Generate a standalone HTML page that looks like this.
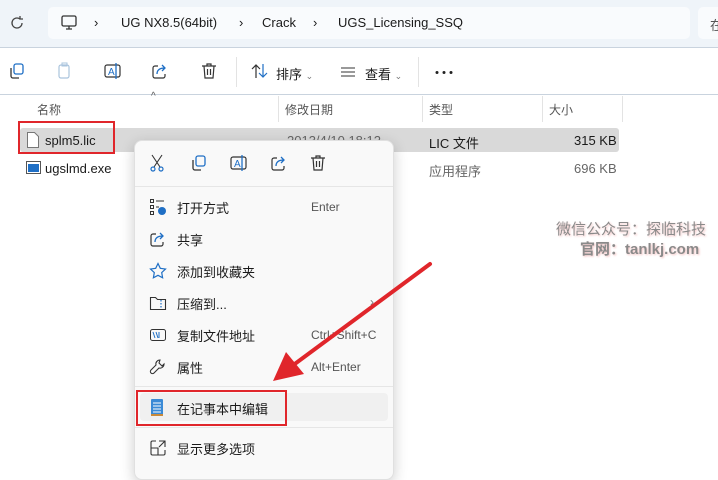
<!DOCTYPE html>
<html><head><meta charset="utf-8"><style>
*{margin:0;padding:0;box-sizing:border-box}
body{width:718px;height:466px;overflow:hidden;background:#fff;font-family:"Liberation Sans","Noto Sans CJK SC",sans-serif;color:#1a1a1a;position:relative;font-size:12px}
.a{position:absolute}
.top{left:0;top:0;width:718px;height:48px;background:#eff4f9;border-bottom:1px solid #c9d3de}
.addr{left:48px;top:7px;width:642px;height:32px;background:#f9fbfd;border-radius:5px}
.addr2{left:698px;top:7px;width:30px;height:32px;background:#f9fbfd;border-radius:5px}
.t13{font-size:13px}
.hdr{color:#555;font-size:12px}
.vl{width:1px;background:#e3e3e3}
.menu{left:134px;top:140px;width:260px;height:340px;background:#f9f9f9;border-radius:8px;box-shadow:0 4px 14px rgba(0,0,0,.2);border:1px solid #e0e0e0}
.mi{left:177px;font-size:13px}
.sc{left:311px;font-size:12px;color:#555}
.sep{left:135px;width:258px;height:1px;background:#e6e6e6}
svg{position:absolute}
</style></head><body>
<div class="a top"></div>
<svg style="left:8px;top:14px" width="18" height="18" viewBox="0 0 18 18"><path d="M14 9a5 5 0 1 1-2-4M12 2v3h3" fill="none" stroke="#444" stroke-width="1.3"/></svg>
<div class="a addr"></div><div class="a addr2"></div>
<svg style="left:60px;top:14px" width="18" height="18" viewBox="0 0 18 18"><rect x="2" y="2" width="14" height="10" rx="1.5" fill="none" stroke="#333" stroke-width="1.3"/><path d="M6 15h6M9 12v3" stroke="#333" stroke-width="1.3"/></svg>
<div class="a t13" style="left:94px;top:15px">›</div>
<div class="a t13" style="left:121px;top:15px">UG NX8.5(64bit)</div>
<div class="a t13" style="left:239px;top:15px">›</div>
<div class="a t13" style="left:262px;top:15px">Crack</div>
<div class="a t13" style="left:313px;top:15px">›</div>
<div class="a t13" style="left:338px;top:15px">UGS_Licensing_SSQ</div>
<div class="a" style="left:710px;top:15px;font-size:13px;color:#555">在</div>
<!-- toolbar -->
<svg style="left:8px;top:62px" width="18" height="18" viewBox="0 0 18 18"><rect x="6" y="2" width="9" height="10" rx="2" fill="none" stroke="#1f6fc5" stroke-width="1.3"/><path d="M3 6v8a2 2 0 0 0 2 2h6" fill="none" stroke="#333" stroke-width="1.3"/></svg>
<svg style="left:56px;top:62px" width="18" height="18" viewBox="0 0 18 18"><rect x="3" y="3" width="10" height="13" rx="2" fill="none" stroke="#aac4dd" stroke-width="1.2"/><rect x="6" y="1" width="5" height="3" fill="none" stroke="#aac4dd"/></svg>
<svg style="left:103px;top:62px" width="20" height="18" viewBox="0 0 20 18"><rect x="2" y="3" width="15" height="12" rx="2" fill="none" stroke="#333" stroke-width="1.2"/><text x="5" y="13" font-size="10" fill="#1f6fc5" font-family="Liberation Sans">A</text><path d="M13 1v16" stroke="#1f6fc5" stroke-width="1.3"/></svg>
<svg style="left:151px;top:62px" width="18" height="18" viewBox="0 0 18 18"><path d="M7 4H4a2 2 0 0 0-2 2v8a2 2 0 0 0 2 2h8a2 2 0 0 0 2-2v-2" fill="none" stroke="#333" stroke-width="1.2"/><path d="M6 12c0-4 3-6 8-6M11 3l3 3-3 3" fill="none" stroke="#1f6fc5" stroke-width="1.3"/></svg>
<svg style="left:200px;top:62px" width="18" height="18" viewBox="0 0 18 18"><path d="M2 4h14M7 4V2h4v2M4 4l1 12h8l1-12M7.5 7v6M10.5 7v6" fill="none" stroke="#333" stroke-width="1.2"/></svg>
<div class="a vl" style="left:236px;top:57px;height:30px"></div>
<svg style="left:251px;top:63px" width="18" height="16" viewBox="0 0 18 16"><path d="M5 15V2M1 6l4-4 4 4" fill="none" stroke="#333" stroke-width="1.2"/><path d="M12 1v13M8 10l4 4 4-4" fill="none" stroke="#1f6fc5" stroke-width="1.2"/></svg>
<div class="a t13" style="left:276px;top:64px">排序 <span style="font-size:9px;color:#777">⌄</span></div>
<svg style="left:340px;top:66px" width="16" height="12" viewBox="0 0 16 12"><path d="M1 2h14M1 6h14M1 10h14" stroke="#333" stroke-width="1.1"/></svg>
<div class="a t13" style="left:365px;top:64px">查看 <span style="font-size:9px;color:#777">⌄</span></div>
<div class="a vl" style="left:418px;top:57px;height:30px"></div>
<svg style="left:434px;top:70px" width="20" height="5" viewBox="0 0 20 5"><circle cx="3" cy="2.5" r="1.5" fill="#222"/><circle cx="10" cy="2.5" r="1.5" fill="#222"/><circle cx="17" cy="2.5" r="1.5" fill="#222"/></svg>
<div class="a" style="left:0;top:94px;width:718px;height:1px;background:#c9d3de"></div>
<!-- header -->
<div class="a" style="left:151px;top:91px;font-size:10px;color:#555">^</div>
<div class="a hdr" style="left:37px;top:101px">名称</div>
<div class="a vl" style="left:278px;top:96px;height:26px"></div>
<div class="a hdr" style="left:285px;top:101px">修改日期</div>
<div class="a vl" style="left:422px;top:96px;height:26px"></div>
<div class="a hdr" style="left:429px;top:101px">类型</div>
<div class="a vl" style="left:542px;top:96px;height:26px"></div>
<div class="a hdr" style="left:549px;top:101px">大小</div>
<div class="a vl" style="left:622px;top:96px;height:26px"></div>
<!-- rows -->
<div class="a" style="left:20px;top:128px;width:599px;height:24px;background:#d9d9d9;border-radius:3px"></div>
<svg style="left:26px;top:131px" width="14" height="18" viewBox="0 0 14 18"><path d="M1.5 1.5h7l4 4v11h-11z" fill="#fff" stroke="#777"/></svg>
<div class="a t13" style="left:45px;top:133px">splm5.lic</div>
<div class="a" style="left:18px;top:121px;width:97px;height:33px;border:2px solid #e0262b"></div>
<div class="a t13" style="left:287px;top:133px;color:#666">2013/4/10 18:12</div>
<div class="a t13" style="left:429px;top:133px">LIC 文件</div>
<div class="a t13" style="left:574px;top:133px">315 KB</div>
<svg style="left:26px;top:161px" width="15" height="13" viewBox="0 0 15 13"><rect x=".5" y=".5" width="14" height="12" fill="#fff" stroke="#555"/><rect x="2" y="3" width="11" height="8" fill="#1f6fc5"/></svg>
<div class="a t13" style="left:45px;top:161px">ugslmd.exe</div>
<div class="a t13" style="left:429px;top:161px;color:#666">应用程序</div>
<div class="a t13" style="left:574px;top:161px;color:#666">696 KB</div>
<!-- watermark -->
<div class="a" style="left:556px;top:218px;font-size:15px;color:#8a8a8a;text-shadow:1px 1px 2px #f3c0c0">微信公众号：探临科技</div>
<div class="a" style="left:580px;top:238px;font-size:15px;color:#8a8a8a;font-weight:bold;text-shadow:1px 1px 2px #f3c0c0">官网：tanlkj.com</div>
<!-- menu -->
<div class="a menu"></div>
<svg style="left:149px;top:154px" width="16" height="18" viewBox="0 0 16 18"><path d="M3 1l8 12M13 1L5 13" stroke="#333" stroke-width="1.1"/><circle cx="4" cy="15" r="2" fill="none" stroke="#1f6fc5" stroke-width="1.2"/><circle cx="12" cy="15" r="2" fill="none" stroke="#1f6fc5" stroke-width="1.2"/></svg>
<svg style="left:190px;top:154px" width="18" height="18" viewBox="0 0 18 18"><rect x="6" y="2" width="9" height="10" rx="2" fill="none" stroke="#1f6fc5" stroke-width="1.3"/><path d="M3 6v8a2 2 0 0 0 2 2h6" fill="none" stroke="#333" stroke-width="1.3"/></svg>
<svg style="left:229px;top:154px" width="20" height="18" viewBox="0 0 20 18"><rect x="2" y="3" width="15" height="12" rx="2" fill="none" stroke="#333" stroke-width="1.2"/><text x="5" y="13" font-size="10" fill="#1f6fc5" font-family="Liberation Sans">A</text><path d="M13 1v16" stroke="#1f6fc5" stroke-width="1.3"/></svg>
<svg style="left:270px;top:154px" width="18" height="18" viewBox="0 0 18 18"><path d="M7 4H4a2 2 0 0 0-2 2v8a2 2 0 0 0 2 2h8a2 2 0 0 0 2-2v-2" fill="none" stroke="#333" stroke-width="1.2"/><path d="M6 12c0-4 3-6 8-6M11 3l3 3-3 3" fill="none" stroke="#1f6fc5" stroke-width="1.3"/></svg>
<svg style="left:309px;top:154px" width="18" height="18" viewBox="0 0 18 18"><path d="M2 4h14M7 4V2h4v2M4 4l1 12h8l1-12M7.5 7v6M10.5 7v6" fill="none" stroke="#333" stroke-width="1.2"/></svg>
<div class="a sep" style="top:186px"></div>
<svg style="left:149px;top:198px" width="18" height="18" viewBox="0 0 18 18"><rect x="1.5" y="1.5" width="3" height="3" fill="none" stroke="#333"/><rect x="1.5" y="7.5" width="3" height="3" fill="none" stroke="#333"/><rect x="1.5" y="13.5" width="3" height="3" fill="none" stroke="#333"/><path d="M7 3h8M7 9h3" stroke="#333"/><circle cx="13" cy="13" r="4" fill="#1f6fc5"/></svg>
<div class="a mi" style="top:198px">打开方式</div><div class="a sc" style="top:200px">Enter</div>
<svg style="left:149px;top:230px" width="18" height="18" viewBox="0 0 18 18"><path d="M7 4H4a2 2 0 0 0-2 2v8a2 2 0 0 0 2 2h8a2 2 0 0 0 2-2v-2" fill="none" stroke="#333" stroke-width="1.2"/><path d="M6 12c0-4 3-6 8-6M11 3l3 3-3 3" fill="none" stroke="#1f6fc5" stroke-width="1.3"/></svg>
<div class="a mi" style="top:230px">共享</div>
<svg style="left:149px;top:262px" width="18" height="18" viewBox="0 0 18 18"><path d="M9 1.5l2.3 4.8 5.2.7-3.8 3.6.9 5.2L9 13.3l-4.6 2.5.9-5.2L1.5 7l5.2-.7z" fill="none" stroke="#1f6fc5" stroke-width="1.2"/></svg>
<div class="a mi" style="top:262px">添加到收藏夹</div>
<svg style="left:149px;top:294px" width="18" height="18" viewBox="0 0 18 18"><path d="M1.5 3.5h5l2 2h8v10h-15z" fill="none" stroke="#333" stroke-width="1.1"/><path d="M12 6v9" stroke="#1f6fc5" stroke-dasharray="1.5 1.5" stroke-width="1.2"/></svg>
<div class="a mi" style="top:294px">压缩到...</div><div class="a" style="left:370px;top:295px;color:#777">›</div>
<svg style="left:149px;top:326px" width="18" height="18" viewBox="0 0 18 18"><rect x="1.5" y="3.5" width="15" height="11" rx="2" fill="none" stroke="#333"/><path d="M4 6l2 6M7 6l2 6M10 6l0 6" stroke="#1f6fc5"/></svg>
<div class="a mi" style="top:326px">复制文件地址</div><div class="a sc" style="top:328px">Ctrl+Shift+C</div>
<svg style="left:149px;top:358px" width="18" height="18" viewBox="0 0 18 18"><path d="M11 2a4 4 0 0 0-4 5L2 12a2 2 0 0 0 3 3l5-5a4 4 0 0 0 5-4l-2 2-3-3z" fill="none" stroke="#333" stroke-width="1.1"/></svg>
<div class="a mi" style="top:358px">属性</div><div class="a sc" style="top:360px">Alt+Enter</div>
<div class="a sep" style="top:386px"></div>
<div class="a" style="left:140px;top:393px;width:248px;height:28px;background:#f0f0f0;border-radius:4px"></div>
<svg style="left:150px;top:398px" width="14" height="18" viewBox="0 0 14 18"><rect x="1" y="1" width="12" height="16" rx="1" fill="#3a8ad6"/><path d="M3 5h8M3 8h8M3 11h8M3 14h8" stroke="#fff"/><rect x="1" y="16" width="12" height="2" fill="#c98a3a"/></svg>
<div class="a mi" style="top:399px">在记事本中编辑</div>
<div class="a" style="left:136px;top:390px;width:151px;height:36px;border:2px solid #e0262b"></div>
<div class="a sep" style="top:427px"></div>
<svg style="left:149px;top:439px" width="18" height="18" viewBox="0 0 18 18"><path d="M7 2H3.5A1.5 1.5 0 0 0 2 3.5v11A1.5 1.5 0 0 0 3.5 16h11a1.5 1.5 0 0 0 1.5-1.5V11M2 9h7v7M10 2h6v6M16 2l-6 6" fill="none" stroke="#333" stroke-width="1.1"/></svg>
<div class="a mi" style="top:439px">显示更多选项</div>
<!-- arrow -->
<svg style="left:0;top:0" width="718" height="466"><path d="M430 264L292 366" stroke="#e0262b" stroke-width="4" stroke-linecap="round"/><path d="M273 381L286 352L304 374z" fill="#e0262b"/></svg>
</body></html>
